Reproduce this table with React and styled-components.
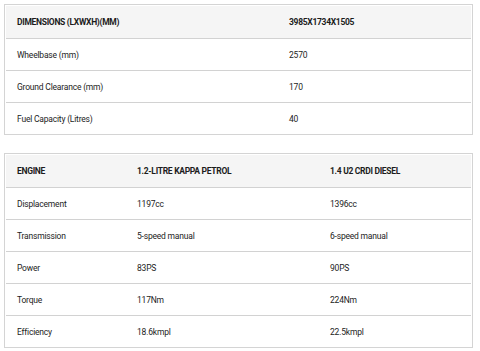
import React from "react";
import styled, { createGlobalStyle } from "styled-components";

const GlobalStyle = createGlobalStyle`
  body {
    margin: 0;
    background: #fff;
    font-family: Roboto, "Liberation Sans", sans-serif;
    color: #1c1c1c;
  }
`;

const Page = styled.div`
  display: flex;
  flex-direction: column;
  gap: 18px;
  padding: 4px 7px 4px 4px;
`;

const Table = styled.div`
  border: 1px solid #d4d4d4;
  padding: 0 1px;
`;

const Row = styled.div`
  display: grid;
  grid-template-columns: ${(p) => p.$cols};
  align-items: center;
  height: ${(p) => (p.$head ? "32px" : "31px")};
  background: ${(p) => (p.$head ? "#f5f5f5" : "#fff")};
  border-top: ${(p) => (p.$head ? "none" : "1px solid #d2d2d2")};
  margin-top: ${(p) => (p.$head ? "1px" : "0")};
  font-size: 8.5px;
  font-weight: ${(p) => (p.$head ? 700 : 400)};
  text-transform: ${(p) => (p.$head ? "uppercase" : "none")};
  letter-spacing: ${(p) => (p.$head ? "-0.3px" : "-0.2px")};
`;

const Cell = styled.div`
  padding-left: 11px;
  white-space: nowrap;
`;

const dims = {
  cols: "272px 1fr",
  head: ["Dimensions (LxWxH)(mm)", "3985x1734x1505"],
  rows: [
    ["Wheelbase (mm)", "2570"],
    ["Ground Clearance (mm)", "170"],
    ["Fuel Capacity (Litres)", "40"],
  ],
};

const engine = {
  cols: "120px 193px 1fr",
  head: ["Engine", "1.2-Litre Kappa Petrol", "1.4 U2 CRDi Diesel"],
  rows: [
    ["Displacement", "1197cc", "1396cc"],
    ["Transmission", "5-speed manual", "6-speed manual"],
    ["Power", "83PS", "90PS"],
    ["Torque", "117Nm", "224Nm"],
    ["Efficiency", "18.6kmpl", "22.5kmpl"],
  ],
};

function SpecTable({ data }) {
  return (
    <Table>
      <Row $head $cols={data.cols}>
        {data.head.map((h) => (
          <Cell key={h}>{h}</Cell>
        ))}
      </Row>
      {data.rows.map((r) => (
        <Row key={r[0]} $cols={data.cols}>
          {r.map((c, i) => (
            <Cell key={i}>{c}</Cell>
          ))}
        </Row>
      ))}
    </Table>
  );
}

export default function App() {
  return (
    <>
      <GlobalStyle />
      <Page>
        <SpecTable data={dims} />
        <SpecTable data={engine} />
      </Page>
    </>
  );
}
